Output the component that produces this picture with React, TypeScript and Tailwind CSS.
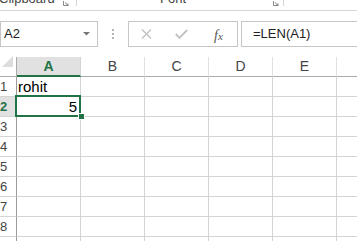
import React from "react";

const cols = ["A", "B", "C", "D", "E", "F"];
const rows = [1, 2, 3, 4, 5, 6, 7, 8, 9];

export default function App() {
  return (
    <div className="w-[357px] h-[241px] overflow-hidden bg-white relative" style={{ fontFamily: '"Segoe UI", "Noto Sans", "Liberation Sans", sans-serif' }}>
      {/* ribbon bottom */}
      <div className="h-[11px] border-b border-[#d5d5d5] relative overflow-hidden text-[13px] text-[#444]" style={{ fontFamily: '"Liberation Sans", Arial, sans-serif' }}>
        <div className="absolute left-[-1px] top-[-9px] leading-[16px]">Clipboard</div>
        <svg className="absolute left-[63px] top-[1px]" width="6" height="5" viewBox="0 0 6 5">
          <path d="M0.5 0 V4.5 H5.5" stroke="#888" fill="none" />
          <path d="M2 1.5 L5 4.2 M5 2.5 V4.2 H3.3" stroke="#888" fill="none" />
        </svg>
        <div className="absolute left-[76px] top-0 w-px h-[6px] bg-[#d5d5d5]" />
        <div className="absolute left-[160px] top-[-9px] leading-[16px]">Font</div>
        <svg className="absolute left-[273px] top-[1px]" width="6" height="5" viewBox="0 0 6 5">
          <path d="M0.5 0 V4.5 H5.5" stroke="#888" fill="none" />
          <path d="M2 1.5 L5 4.2 M5 2.5 V4.2 H3.3" stroke="#888" fill="none" />
        </svg>
        <div className="absolute left-[283px] top-0 w-px h-[6px] bg-[#d5d5d5]" />
      </div>

      {/* formula bar */}
      <div className="mt-[10px] h-[26px] flex items-stretch" style={{ fontFamily: '"Liberation Sans", Arial, sans-serif' }}>
        <div className="w-[98px] border border-[#c6c6c6] flex items-center justify-between pl-[3px] pr-[7px] text-[13px] text-[#222]">
          <span>A2</span>
          <svg width="7" height="4" viewBox="0 0 7 4"><path d="M0 0 H7 L3.5 3.5 Z" fill="#777" /></svg>
        </div>
        <div className="w-[30px] flex items-center justify-center">
          <svg width="2" height="10" viewBox="0 0 2 10">
            <rect x="0" y="0" width="2" height="2" fill="#b5b5b5" />
            <rect x="0" y="4" width="2" height="2" fill="#b5b5b5" />
            <rect x="0" y="8" width="2" height="2" fill="#b5b5b5" />
          </svg>
        </div>
        <div className="w-[110px] border border-[#c6c6c6] relative">
          <svg className="absolute left-[12px] top-[7px]" width="11" height="10" viewBox="0 0 11 10">
            <path d="M1 0.5 L10 9.5 M10 0.5 L1 9.5" stroke="#c0c0c0" strokeWidth="1.3" />
          </svg>
          <svg className="absolute left-[46px] top-[7px]" width="13" height="10" viewBox="0 0 13 10">
            <path d="M0.8 5 L4.5 8.8 L12.2 1" stroke="#c0c0c0" strokeWidth="1.8" fill="none" />
          </svg>
          <span className="absolute left-[85px] top-[3px] text-[14px] italic text-[#555]" style={{ fontFamily: '"Liberation Serif", serif' }}>
            f<span className="text-[11px]">x</span>
          </span>
        </div>
        <div className="w-[3px]" />
        <div className="flex-1 border border-[#c6c6c6] border-r-0 flex items-center pl-[11px] text-[13px] text-[#222]">
          =LEN(A1)
        </div>
      </div>

      {/* grid */}
      <div className="mt-[10px] text-[14px]" style={{ fontFamily: '"Liberation Sans", Arial, sans-serif' }}>
        {/* header row */}
        <div className="flex h-[20px]">
          <div className="w-[17px] shrink-0 border-b border-r border-[#ababab] relative">
            <svg className="absolute left-[2px] top-[-1px]" width="12" height="12" viewBox="0 0 12 12">
              <path d="M11 0 V11 H0 Z" fill="#dcdcdc" />
            </svg>
          </div>
          {cols.map((c) => (
            <div
              key={c}
              className={
                c === "A"
                  ? "w-[64px] shrink-0 bg-[#e1e1e1] border-b-2 border-b-[#217346] border-r border-r-[#d4d4d4] flex items-center justify-center text-[#217346] font-bold"
                  : "w-[64px] shrink-0 border-b border-b-[#ababab] border-r border-r-[#e1e1e1] flex items-center justify-center text-[#444]"
              }
            >
              {c}
            </div>
          ))}
        </div>
        {rows.map((r) => (
          <div key={r} className="flex h-[20px]">
            <div
              className={
                r === 2
                  ? "w-[17px] shrink-0 bg-[#e1e1e1] border-r border-r-[#9b9b9b] border-b border-b-[#d4d4d4] text-[13px] font-bold text-[#217346] leading-[19px] pl-0"
                  : "w-[17px] shrink-0 border-r border-r-[#9b9b9b] border-b border-b-[#d4d4d4] text-[13px] text-[#444] leading-[19px] pl-0"
              }
            >
              {r}
            </div>
            {cols.map((c) => (
              <div
                key={c}
                className="w-[64px] shrink-0 border-r border-b border-[#d4d4d4] relative leading-[19px] text-black"
              >
                {r === 1 && c === "A" && <span className="absolute left-[1px] top-[0px] text-[15px]">rohit</span>}
                {r === 2 && c === "A" && (
                  <>
                    <div className="absolute left-[-2px] top-[-2px] w-[66px] h-[22px] border-2 border-[#217346] z-10" />
                    <span className="absolute right-[3px] top-[0px] text-[15px]">5</span>
                    <div className="absolute left-[61px] top-[16px] w-[5px] h-[5px] bg-[#217346] border border-white box-content z-20" />
                  </>
                )}
              </div>
            ))}
          </div>
        ))}
      </div>
    </div>
  );
}
